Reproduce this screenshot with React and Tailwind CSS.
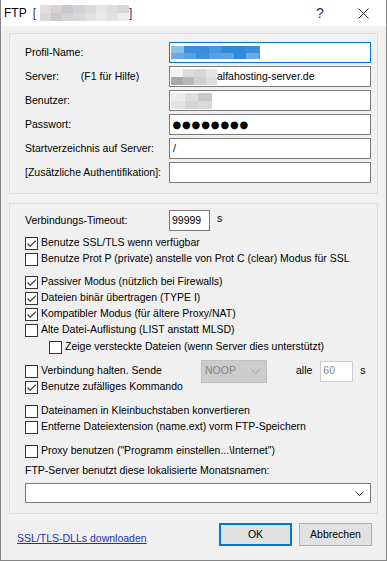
function CheckMark() {
  return (
    <svg width="11" height="11" viewBox="0 0 11 11">
      <path d="M1.5 5.5 L4.2 8.2 L9.8 2.6" fill="none" stroke="#333" strokeWidth="1.1" />
    </svg>
  );
}

function Check({ checked, children, className = "" }) {
  return (
    <div className={`flex h-4 items-center ${className}`}>
      <span className="flex h-[13px] w-[13px] shrink-0 items-center justify-center border border-[#333] bg-white">
        {checked && <CheckMark />}
      </span>
      <span className="ml-[3px] whitespace-nowrap">{children}</span>
    </div>
  );
}

function Chevron({ color = "#333" }) {
  return (
    <svg width="9" height="5" viewBox="0 0 9 5">
      <path d="M0.5 0.5 L4.5 4.5 L8.5 0.5" fill="none" stroke={color} strokeWidth="1" />
    </svg>
  );
}

function Blur({ rows, className = "" }) {
  return (
    <div className={`flex flex-col ${className}`}>
      {rows.map((row, i) => (
        <div key={i} className="flex flex-1">
          {row.map((c, j) => (
            <div key={j} className="flex-1" style={{ backgroundColor: c }} />
          ))}
        </div>
      ))}
    </div>
  );
}

function Field({ label, children, focused }) {
  return (
    <div className="flex h-[21px] items-center">
      <div className="w-[144px] shrink-0 whitespace-nowrap">{label}</div>
      <div
        className={`flex h-[21px] w-[202px] items-center border bg-white pl-[1px] ${
          focused ? "border-[#0078d7]" : "border-[#7a7a7a]"
        }`}
      >
        {children}
      </div>
    </div>
  );
}

export default function App() {
  return (
    <div className="h-[561px] w-[387px] overflow-hidden bg-[#f0f0f0] font-['Liberation_Sans',Arial,sans-serif] text-[10.5px] text-black">
      <div className="flex h-[561px] flex-col border border-t-0 border-[#858585]">
        {/* title bar */}
        <div className="relative flex h-[26px] shrink-0 items-center bg-white pl-[3px] text-[12px]">
          <span>FTP</span>
          <span className="ml-[6px] text-[#4a2a55]">[</span>
          <Blur
            className="ml-[4px] h-[16px] w-[89px]"
            rows={[
              ["#e2dddd", "#d8d3d3", "#c9c8cd", "#d3d1d5", "#dcdadd", "#e6e5e7", "#dddcde", "#d6d5d9"],
              ["#dcd8d8", "#cec9c9", "#d5d3d6", "#d8d6d9", "#e0dfe1", "#e9e8ea", "#e3e2e4", "#eeeeee"],
            ]}
          />
          <span className="text-[#4a2a55]">]</span>
          <span className="absolute left-[315px] top-[5px] text-[14px] leading-4 text-[#333]">?</span>
          <svg className="absolute left-[357px] top-[8px]" width="11" height="11" viewBox="0 0 11 11">
            <path d="M0.5 0.5 L10.5 10.5 M10.5 0.5 L0.5 10.5" stroke="#222" strokeWidth="1" />
          </svg>
        </div>

        <div className="flex flex-1 flex-col px-[8px]">
          {/* profile group */}
          <div className="mt-[7px] flex flex-col gap-[3px] border border-[#dcdcdc] pb-[10px] pl-[15px] pr-[6px] pt-[8px]">
            <Field label="Profil-Name:" focused>
              <div className="flex h-[13px] items-stretch">
                <Blur
                  className="w-[88px]"
                  rows={[
                    ["#8cc0ec", "#3d8fdc", "#3a8ddb", "#4a98e0", "#3189dc", "#2f88da", "#3a8fdc"],
                    ["#6aaae6", "#5aa1e3", "#3d8fdc", "#5aa1e3", "#5da3e4", "#2f88da", "#6da9e6"],
                  ]}
                />
                <div className="w-[1px] bg-[#e8642c]" />
              </div>
            </Field>
            <Field label={<span>Server:<span className="ml-[22px]">(F1 für Hilfe)</span></span>}>
              <Blur
                className="h-[16px] w-[46px]"
                rows={[
                  ["#f2f2f2", "#dcdcdc", "#d6d6d6", "#e4e4e4"],
                  ["#a9a7a9", "#b8b6b8", "#cfcfcf", "#dddddd"],
                ]}
              />
              <span className="whitespace-nowrap">alfahosting-server.de</span>
            </Field>
            <Field label="Benutzer:">
              <Blur
                className="h-[16px] w-[41px]"
                rows={[
                  ["#ececec", "#dedede", "#c9c7ca"],
                  ["#e4e4e4", "#d5d5d5", "#d9d9d9"],
                ]}
              />
            </Field>
            <Field label="Passwort:">
              <div className="ml-[1px] flex">
                {Array.from({ length: 8 }).map((_, i) => (
                  <span key={i} className="w-[9.6px] text-center font-['DejaVu_Sans'] text-[10px] leading-none">
                    ●
                  </span>
                ))}
              </div>
            </Field>
            <Field label="Startverzeichnis auf Server:">
              <span className="pl-[2px]">/</span>
            </Field>
            <Field label="[Zusätzliche Authentifikation]:" />
          </div>

          {/* options group */}
          <div className="mt-[9px] flex flex-col border border-[#dcdcdc] pb-[10px] pl-[15px] pt-[6px]">
            <div className="flex h-[21px] items-center">
              <div className="w-[144px] shrink-0">Verbindungs-Timeout:</div>
              <div className="flex h-[21px] w-[41px] items-center border border-[#7a7a7a] bg-white pl-[2px]">99999</div>
              <span className="-mt-[3px] ml-[7px]">s</span>
            </div>
            <Check checked className="mt-[4px]">Benutze SSL/TLS wenn verfügbar</Check>
            <Check>Benutze Prot P (private) anstelle von Prot C (clear) Modus für SSL</Check>
            <Check checked className="mt-[7px]">Passiver Modus (nützlich bei Firewalls)</Check>
            <Check checked>Dateien binär übertragen (TYPE I)</Check>
            <Check checked>Kompatibler Modus (für ältere Proxy/NAT)</Check>
            <Check>Alte Datei-Auflistung (LIST anstatt MLSD)</Check>
            <Check className="ml-[24px] mt-[1px]">Zeige versteckte Dateien (wenn Server dies unterstützt)</Check>
            <div className="mt-[8px] flex h-4 items-center">
              <span className="h-[13px] w-[13px] shrink-0 border border-[#333] bg-white" />
              <span className="ml-[3px] w-[160px] whitespace-nowrap">Verbindung halten. Sende</span>
              <div className="flex h-[23px] w-[66px] items-center justify-between border border-[#bfbfbf] bg-[#cccccc] pl-[3px] pr-[6px] text-[#838383]">
                <span>NOOP</span>
                <Chevron color="#a4a4a4" />
              </div>
              <span className="ml-[29px]">alle</span>
              <div className="ml-[8px] flex h-[21px] w-[33px] items-center border border-[#cccccc] bg-white pl-[2px] text-[#8a8a8a]">
                60
              </div>
              <span className="ml-[7px]">s</span>
            </div>
            <Check checked>Benutze zufälliges Kommando</Check>
            <Check className="mt-[8px]">Dateinamen in Kleinbuchstaben konvertieren</Check>
            <Check>Entferne Dateiextension (name.ext) vorm FTP-Speichern</Check>
            <Check className="mt-[8px]">Proxy benutzen ("Programm einstellen...\Internet")</Check>
            <div className="mt-[4px] h-[14px] leading-[14px]">FTP-Server benutzt diese lokalisierte Monatsnamen:</div>
            <div className="mt-[6px] flex h-[20px] w-[346px] items-center justify-end border border-[#7a7a7a] bg-white pr-[6px]">
              <Chevron />
            </div>
          </div>

          {/* footer */}
          <div className="mt-[9px] flex items-start">
            <a href="#" className="ml-[8px] mt-[8px] leading-[14px] text-[#1a2fb0] underline">
              SSL/TLS-DLLs downloaden
            </a>
            <div className="ml-auto mr-[6px] flex">
              <button className="flex h-[23px] w-[73px] items-center justify-center border-2 border-[#0078d7] bg-[#e1e1e1]">
                OK
              </button>
              <button className="ml-[7px] flex h-[23px] w-[73px] items-center justify-center border border-[#adadad] bg-[#e1e1e1]">
                Abbrechen
              </button>
            </div>
          </div>
        </div>
      </div>
    </div>
  );
}
